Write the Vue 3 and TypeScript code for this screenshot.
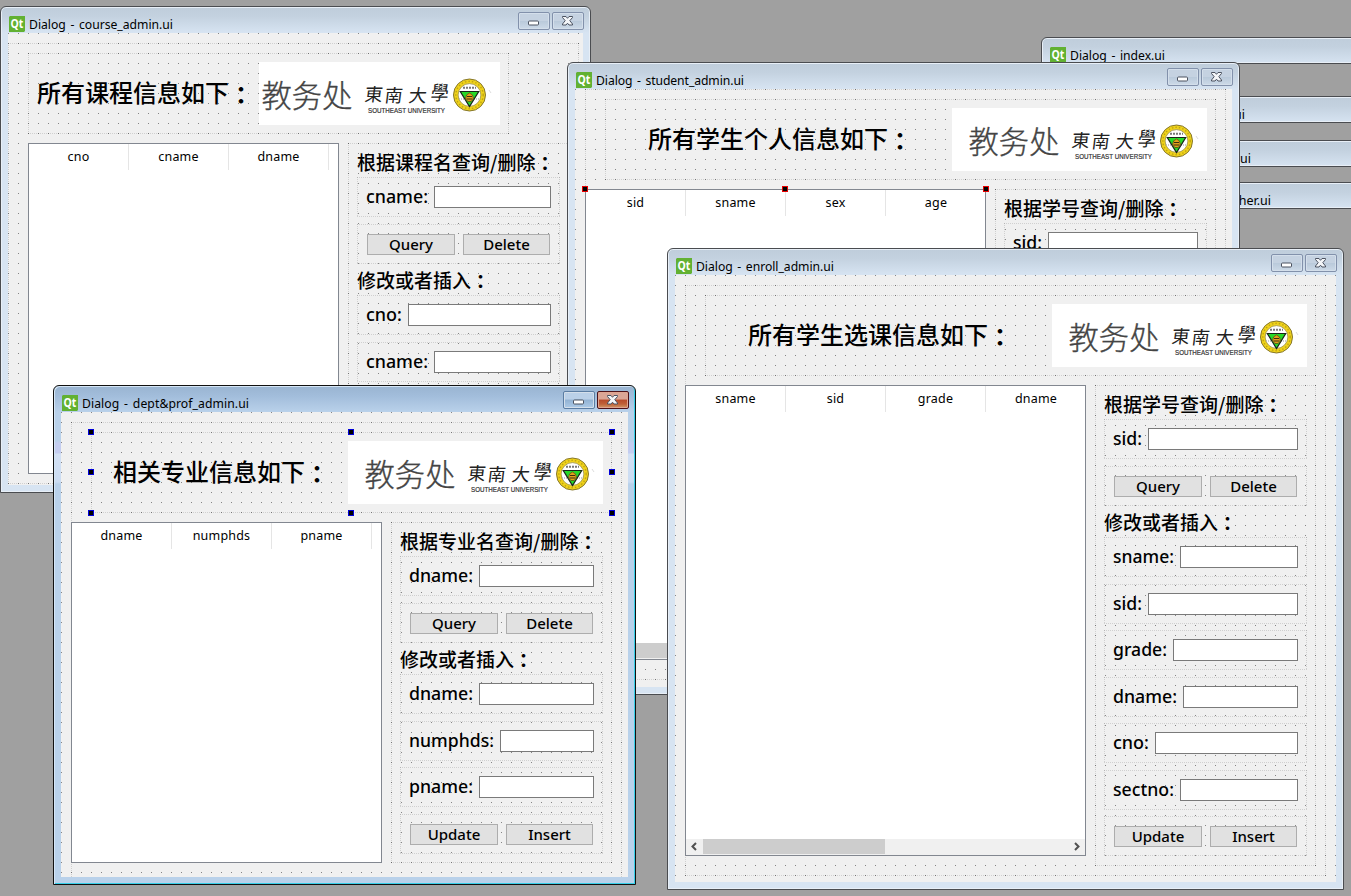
<script setup lang="ts">
interface Row {
  kind: 'field' | 'buttons' | 'heading'
  text?: string
  labelWidth?: number
  buttons?: string[]
}
interface Dialog {
  id: string
  title: string
  titleWidth: number
  x: number
  y: number
  w: number
  h: number
  active?: boolean
  outer: { x: number; y: number; w: number; h: number }
  heading: string
  headerWidth: number
  bannerWidth: number
  bodyIndent: number
  table: { w: number; h: number; columns: string[]; scroll?: boolean }
  panelHeight: number
  rows: Row[]
  handles?: { color: string; points: [number, number][] }
}

const heading = (text: string): Row => ({ kind: 'heading', text })
const field = (text: string, labelWidth: number): Row => ({ kind: 'field', text, labelWidth })
const buttons = (...names: string[]): Row => ({ kind: 'buttons', buttons: names })

const stubs = [
  { x: 1041, y: 37, w: 340, title: 'Dialog - index.ui', titleWidth: 95, end: 0, icon: true },
  { x: 1200, y: 96, w: 200, title: 'ui', titleWidth: 0, end: 1245, icon: false },
  { x: 1200, y: 140, w: 200, title: '.ui', titleWidth: 0, end: 1251, icon: false },
  { x: 1200, y: 182, w: 200, title: 'her.ui', titleWidth: 0, end: 1271, icon: false },
]

const dialogs: Dialog[] = [
  {
    id: 'course', title: 'Dialog - course_admin.ui', titleWidth: 144,
    x: 0, y: 6, w: 591, h: 487,
    outer: { x: 0, y: 10, w: 571, h: 441 },
    heading: '所有课程信息如下', headerWidth: 481, bannerWidth: 241, bodyIndent: 20,
    table: { w: 311, h: 331, columns: ['cno', 'cname', 'dname'] },
    panelHeight: 331,
    rows: [
      heading('根据课程名查询/删除'), field('cname:', 62), buttons('Query', 'Delete'),
      heading('修改或者插入'), field('cno:', 36), field('cname:', 62),
    ],
  },
  {
    id: 'student', title: 'Dialog - student_admin.ui', titleWidth: 148,
    x: 567, y: 62, w: 673, h: 633,
    outer: { x: 10, y: 0, w: 641, h: 591 },
    heading: '所有学生个人信息如下', headerWidth: 611, bannerWidth: 255, bodyIndent: 0,
    table: { w: 401, h: 471, columns: ['sid', 'sname', 'sex', 'age'], scroll: true },
    panelHeight: 481,
    rows: [heading('根据学号查询/删除'), field('sid:', 29)],
    handles: { color: '#e80000', points: [[585, 189], [785, 189], [986, 189]] },
  },
  {
    id: 'dept', title: 'Dialog - dept&prof_admin.ui', titleWidth: 167, active: true,
    x: 53, y: 385, w: 583, h: 500,
    outer: { x: 10, y: 10, w: 551, h: 461 },
    heading: '相关专业信息如下', headerWidth: 521, bannerWidth: 255, bodyIndent: 0,
    table: { w: 311, h: 341, columns: ['dname', 'numphds', 'pname'] },
    panelHeight: 341,
    rows: [
      heading('根据专业名查询/删除'), field('dname:', 64), buttons('Query', 'Delete'),
      heading('修改或者插入'), field('dname:', 64), field('numphds:', 85), field('pname:', 64),
      buttons('Update', 'Insert'),
    ],
    handles: {
      color: '#0000d8',
      points: [[91, 432], [351, 432], [612, 432], [91, 472], [612, 472], [91, 513], [351, 513], [612, 513]],
    },
  },
  {
    id: 'enroll', title: 'Dialog - enroll_admin.ui', titleWidth: 138,
    x: 667, y: 248, w: 677, h: 642,
    outer: { x: 10, y: 10, w: 641, h: 591 },
    heading: '所有学生选课信息如下', headerWidth: 611, bannerWidth: 255, bodyIndent: 0,
    table: { w: 401, h: 471, columns: ['sname', 'sid', 'grade', 'dname'], scroll: true },
    panelHeight: 481,
    rows: [
      heading('根据学号查询/删除'), field('sid:', 29), buttons('Query', 'Delete'),
      heading('修改或者插入'), field('sname:', 61), field('sid:', 29), field('grade:', 54),
      field('dname:', 64), field('cno:', 36), field('sectno:', 61), buttons('Update', 'Insert'),
    ],
  },
]

const px = (n: number) => n + 'px'
const box = (d: { x: number; y: number; w: number; h: number }) => ({
  left: px(d.x), top: px(d.y), width: px(d.w), height: px(d.h),
})
</script>

<template>
  <main class="desktop">
    <div v-for="s in stubs" :key="s.y" class="window stub" :style="{ left: px(s.x), top: px(s.y), width: px(s.w) }">
      <div class="titlebar">
        <svg v-if="s.icon" class="qt" viewBox="0 0 16 16">
          <path d="M1 0H16V15L15 16H0V1Z" fill="#62b132" />
          <text x="1.6" y="12.2" textLength="12.8" lengthAdjust="spacingAndGlyphs">Qt</text>
        </svg>
        <svg v-if="s.icon" class="caption" width="240" height="20">
          <text x="0" y="14" :textLength="s.titleWidth">{{ s.title }}</text>
        </svg>
        <span v-else class="tail" :style="{ width: px(s.end - s.x) }">{{ s.title }}</span>
      </div>
    </div>

    <section v-for="d in dialogs" :key="d.id" class="window" :class="{ active: d.active }" :style="box(d)">
      <div class="titlebar">
        <svg class="qt" viewBox="0 0 16 16">
          <path d="M1 0H16V15L15 16H0V1Z" fill="#62b132" />
          <text x="1.6" y="12.2" textLength="12.8" lengthAdjust="spacingAndGlyphs">Qt</text>
        </svg>
        <svg class="caption" width="240" height="20">
          <text x="0" y="14" :textLength="d.titleWidth">{{ d.title }}</text>
        </svg>
        <span class="control">
          <svg width="30" height="16"><rect x="9.5" y="8" width="10" height="4" rx="1" fill="#fff" stroke="#4b5260" /></svg>
        </span>
        <span class="control close">
          <svg width="30" height="16">
            <path
              d="M9.5 3.5H13L14.5 5.3L16 3.5H19.5V4.5L16.8 7.7L19.5 11V12H16L14.5 10.2L13 12H9.5V11L12.2 7.7L9.5 4.5Z"
              fill="#f4f6f9" stroke="#4b5260" />
          </svg>
        </span>
      </div>

      <div class="client">
        <div
          class="outer layout"
          :style="{ marginLeft: px(d.outer.x), marginTop: px(d.outer.y), width: px(d.outer.w), height: px(d.outer.h) }">
          <header class="header layout" :style="{ width: px(d.headerWidth) }">
            <h1>{{ d.heading }}<span class="colon">：</span></h1>
            <div class="banner" :style="{ width: px(d.bannerWidth) }">
              <svg width="255" height="63" viewBox="0 0 255 63">
                <text class="office" x="16.5" y="45" textLength="91">教务处</text>
                <g class="brush">
                  <text transform="translate(119 39) skewX(-7)">東</text>
                  <text transform="translate(139 40) skewX(-7)">南</text>
                  <text transform="translate(163 39.5) skewX(-7)">大</text>
                  <text transform="translate(185 37.5) skewX(-7) scale(1 1.1)">學</text>
                </g>
                <text class="latin" x="123" y="51.2" textLength="77" lengthAdjust="spacingAndGlyphs">SOUTHEAST UNIVERSITY</text>
                <circle cx="224.5" cy="33" r="16" fill="#efd21a" stroke="#85762c" />
                <circle cx="224.5" cy="33" r="13.7" fill="none" stroke="#c0a512" stroke-width="1.4" stroke-dasharray="1.5 2" />
                <circle cx="224.5" cy="33" r="11.4" fill="#fff" stroke="#9b8d3c" stroke-width=".8" />
                <path d="M218 25.8H231" stroke="#777" stroke-width="2" stroke-dasharray="2 1" />
                <path d="M214 37H220M229 37H235" stroke="#999" stroke-dasharray="1 1" />
                <path d="M215.3 29.5H233.7L224.5 44.5Z" fill="#25d927" stroke="#182418" stroke-width="1.2" />
                <path d="M220.5 37Q220.5 32 224.5 31Q228.5 32 228.5 37L226 39.5H223Z" fill="#e0a21b" stroke="#593e12" stroke-width=".7" />
                <path d="M222 34.5H227M221.5 37H227.5" stroke="#3c2d10" stroke-width="1" />
                <path d="M244 28l2 3" stroke="#ddd" />
              </svg>
            </div>
          </header>

          <div class="body" :style="{ marginLeft: px(d.bodyIndent) }">
            <div class="table" :style="{ width: px(d.table.w), height: px(d.table.h) }">
              <div class="columns">
                <span v-for="c in d.table.columns" :key="c">{{ c }}</span>
              </div>
              <div v-if="d.table.scroll" class="scrollbar">
                <svg width="17" height="17"><path d="M10 4L6.5 7.5L10 11" /></svg>
                <i class="thumb"></i>
                <svg width="17" height="17"><path d="M7 4L10.5 7.5L7 11" /></svg>
              </div>
            </div>

            <div class="panel layout" :style="{ height: px(d.panelHeight) }">
              <template v-for="(r, i) in d.rows" :key="i">
                <h2 v-if="r.kind === 'heading'">{{ r.text }}<span class="colon">：</span></h2>
                <div v-else-if="r.kind === 'field'" class="row layout">
                  <label :style="{ width: px(r.labelWidth ?? 0) }">
                    <svg width="100" height="26">
                      <text x="0" y="19" :textLength="r.labelWidth" lengthAdjust="spacingAndGlyphs">{{ r.text }}</text>
                    </svg>
                  </label>
                  <span class="input"></span>
                </div>
                <div v-else class="row pair layout">
                  <span v-for="b in r.buttons" :key="b" class="button">{{ b }}</span>
                </div>
              </template>
            </div>
          </div>
        </div>
      </div>

      <template v-if="d.handles">
        <i
          v-for="(p, i) in d.handles.points"
          :key="i"
          class="handle"
          :style="{ left: px(p[0] - d.x - 4), top: px(p[1] - d.y - 4), borderColor: d.handles.color }"></i>
      </template>
    </section>
  </main>
</template>

<style>
body {
  margin: 0;
  overflow: hidden;
}
</style>

<style scoped>
.desktop {
  position: relative;
  width: 1351px;
  height: 896px;
  overflow: hidden;
  background: #a0a0a0;
  color: #000;
  font-family: "Noto Sans", "Noto Sans CJK SC", sans-serif;
}
.desktop * {
  box-sizing: border-box;
}
.window {
  position: absolute;
  display: flex;
  flex-direction: column;
  border: 1px solid #4a4c50;
  border-radius: 6px 6px 0 0;
  background: linear-gradient(#bfcddb 0, #c3d1df 9px, #d7e4f2 26px, #d7e4f2 100%);
  box-shadow: inset 0 0 0 1px #e8eff7;
}
.window.active {
  border-color: #111;
  background: linear-gradient(#99b4d1 0, #a2bddb 10px, #b9d1ea 26px, #b9d1ea 55px, #c4cdf0 57px, #c4cdf0 67px, #d3e1f4 68px, #cbdcf2 96px, #b9d1ea 98px);
  box-shadow: inset 1px 1px 0 #d5e6f6, inset -1px -1px 0 #36cfe8;
}
.stub {
  height: 27px;
}
.titlebar {
  display: flex;
  flex: none;
  height: 26px;
  padding: 5px 6px 0 8px;
}
.qt {
  flex: none;
  width: 16px;
  height: 16px;
  margin-top: 4px;
  overflow: visible;
}
.qt text {
  fill: #fff;
  font: bold 13px "Open Sans", sans-serif;
}
.caption {
  flex: none;
  margin: 3px auto 0 4px;
  overflow: visible;
}
.caption text {
  font-size: 12.2px;
  word-spacing: 1.5px;
}
.tail {
  margin-left: -9px;
  padding-top: 3px;
  text-align: right;
  font-size: 12.5px;
  line-height: 20px;
}
.control {
  width: 32px;
  height: 18px;
  border: 1px solid #8291ab;
  border-radius: 2px;
  background: linear-gradient(#c5d2e1 48%, #b9c9da 50%, #cddae8);
  box-shadow: inset 0 0 0 1px #d4dfeb;
}
.control svg {
  display: block;
}
.control.close {
  margin-left: 2px;
}
.active .control {
  border-color: #5b7da3;
  background: linear-gradient(#bad0e8 46%, #91b1d2 48%, #aecbe8);
}
.active .control.close {
  border-color: #4c1219;
  background: linear-gradient(#dba696 46%, #b6492a 48%, #bf6038 75%, #cf9a69);
  box-shadow: inset 0 0 0 1px #dfa491;
}
.client {
  flex: 1;
  min-height: 0;
  margin: 0 7px 7px;
  overflow: hidden;
  background:
    linear-gradient(90deg, transparent 1px, #f0f0f0 1px) 0 0 / 10px 10px,
    linear-gradient(#858585 1px, #f0f0f0 1px) 0 0 / 10px 10px;
}
.client::before {
  content: "";
  display: table;
}
.layout {
  --h: repeating-linear-gradient(90deg, #00000022 0 1px, transparent 1px 2px);
  --v: repeating-linear-gradient(#00000022 0 1px, transparent 1px 2px);
  background:
    var(--h) top / 100% 1px no-repeat,
    var(--h) bottom / 100% 1px no-repeat,
    var(--v) left / 1px 100% no-repeat,
    var(--v) right / 1px 100% no-repeat;
}
.outer {
  padding-top: 10px;
}
.header {
  display: flex;
  height: 81px;
  margin-left: 20px;
  padding: 9px;
}
h1 {
  flex: 1;
  margin: 0;
  text-align: center;
  font: 500 24px/59px "Noto Sans CJK SC", sans-serif;
  white-space: nowrap;
}
.colon {
  position: relative;
  top: 2px;
  font-family: "Noto Sans CJK TC", sans-serif;
  font-weight: 700;
  line-height: 1;
}
.banner {
  display: flex;
  justify-content: flex-end;
  flex: none;
  height: 63px;
  margin-left: 6px;
  overflow: hidden;
  background: #fff;
}
.banner svg {
  flex: none;
}
.office {
  fill: #444;
  stroke: #444;
  stroke-width: 0.35px;
  font: 300 30.3px "Noto Sans CJK SC", sans-serif;
}
.brush text {
  fill: #222;
  font: 400 18px "Noto Sans CJK TC", sans-serif;
}
.latin {
  fill: #333;
  stroke: #333;
  stroke-width: 0.2px;
  font: 7.4px "Liberation Sans", sans-serif;
}
.body {
  display: flex;
  align-items: flex-start;
  gap: 9px;
  margin-top: 9px;
}
.table {
  display: flex;
  flex: none;
  flex-direction: column;
  justify-content: space-between;
  overflow: hidden;
  border: 1px solid #828790;
  background: #fff;
}
.columns {
  display: flex;
  height: 26px;
}
.columns span {
  flex: none;
  width: 100px;
  border-right: 1px solid #e5e5e5;
  text-align: center;
  font-size: 12.5px;
  line-height: 26px;
  letter-spacing: 0.2px;
}
.columns span:nth-child(4) {
  border-right: 0;
}
.scrollbar {
  display: flex;
  height: 16px;
  background: #f0f0f0;
}
.scrollbar svg:last-child {
  margin-left: auto;
}
.scrollbar path {
  fill: none;
  stroke: #505050;
  stroke-width: 2;
}
.thumb {
  width: 182px;
  height: 15px;
  background: #cdcdcd;
}
.panel {
  flex: none;
  display: flex;
  flex-direction: column;
  gap: 6.5px;
  width: 221px;
  padding: 9px 9px 0;
}
h2 {
  flex: none;
  height: 18.5px;
  margin: 0;
  font: 500 19px/16.5px "Noto Sans CJK SC", sans-serif;
  white-space: nowrap;
}
h2 .colon {
  top: 1px;
}
.row {
  display: flex;
  flex: none;
  gap: 6px;
  height: 40px;
  padding: 9px 9px 0;
}
label {
  flex: none;
  height: 22px;
}
label svg {
  display: block;
  overflow: visible;
  margin-top: -2px;
}
label text {
  font-size: 18px;
  font-weight: 500;
}
.input {
  flex: 1;
  height: 22px;
  border: 1px solid #7a7a7a;
  background: #fff;
}
.pair {
  gap: 8px;
  padding: 10px 10px 0;
}
.button {
  flex: none;
  width: 88px;
  height: 21px;
  border: 1px solid #adadad;
  background: #e1e1e1;
  text-align: center;
  font-weight: 500;
  font-size: 15px;
  line-height: 18px;
}
.button:last-child {
  width: 87px;
}
.handle {
  position: absolute;
  width: 6px;
  height: 6px;
  border: 1px solid;
  background: #000;
}
</style>
